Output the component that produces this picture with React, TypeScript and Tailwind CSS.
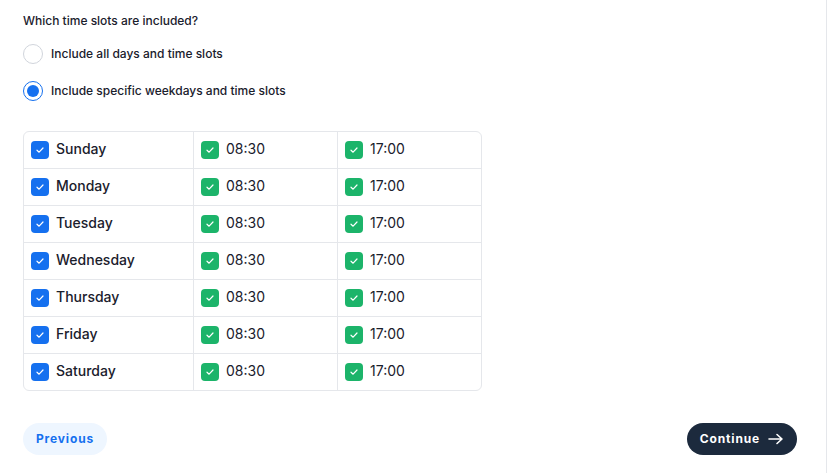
import React from "react";

const days = ["Sunday", "Monday", "Tuesday", "Wednesday", "Thursday", "Friday", "Saturday"];

function Check({ color }: { color: string }) {
  return (
    <span className={`flex h-[18px] w-[18px] shrink-0 items-center justify-center rounded-[4px] ${color}`}>
      <svg width="10" height="10" viewBox="0 0 10 10" fill="none">
        <path d="M2 5.2 L4.1 7.2 L8 3" stroke="white" strokeWidth="1.2" strokeLinecap="round" strokeLinejoin="round" />
      </svg>
    </span>
  );
}

export default function App() {
  return (
    <div className="flex h-[473px] w-[829px] bg-white" style={{ fontFamily: "Inter, 'Liberation Sans', sans-serif" }}>
      <div className="flex w-[827px] flex-col border-r border-gray-200 pl-[23px] pr-[29px] pt-[13px]">
        <div className="text-[12px] font-medium leading-[16px] text-[#1a202c]">Which time slots are included?</div>
        <div className="mt-[15px] flex items-center gap-[8px]">
          <span className="h-[20px] w-[20px] rounded-full border border-gray-300 bg-white" />
          <span className="text-[12px] font-medium text-[#1a202c]">Include all days and time slots</span>
        </div>
        <div className="mt-[17px] flex items-center gap-[8px]">
          <span className="flex h-[20px] w-[20px] items-center justify-center rounded-full border border-[#1570ef] bg-white">
            <span className="h-[12px] w-[12px] rounded-full bg-[#1570ef]" />
          </span>
          <span className="text-[12px] font-medium text-[#1a202c]">Include specific weekdays and time slots</span>
        </div>
        <div className="mt-[30px] w-[459px] overflow-hidden rounded-[6px] border border-gray-200">
          {days.map((d, i) => (
            <div key={d} className={`grid grid-cols-[170px_144px_1fr] ${i > 0 ? "h-[37px] border-t border-gray-200" : "h-[36px]"}`}>
              <div className="flex items-center gap-[7px] border-r border-gray-200 pl-[7px]">
                <Check color="bg-[#1570ef]" />
                <span className="mb-[3px] text-[14px] font-medium text-[#1a202c]">{d}</span>
              </div>
              <div className="flex items-center gap-[7px] border-r border-gray-200 pl-[7px]">
                <Check color="bg-[#1cb46a]" />
                <span className="mb-[3px] text-[14px] text-[#1a202c]">08:30</span>
              </div>
              <div className="flex items-center gap-[7px] pl-[7px]">
                <Check color="bg-[#1cb46a]" />
                <span className="mb-[3px] text-[14px] text-[#1a202c]">17:00</span>
              </div>
            </div>
          ))}
        </div>
        <div className="mt-[32px] flex items-center justify-between">
          <button className="h-[32px] rounded-full bg-[#eef6ff] px-[13px] text-[12px] font-bold tracking-[0.07em] text-[#1570ef]">
            Previous
          </button>
          <button className="flex h-[32px] items-center gap-[8px] rounded-full bg-[#1c2a3d] px-[13px] text-[12px] font-bold tracking-[0.07em] text-white">
            Continue
            <svg width="16" height="12" viewBox="0 0 16 12" fill="none">
              <path d="M1 6 H14 M9 1.5 L14 6 L9 10.5" stroke="white" strokeWidth="1.6" strokeLinecap="round" strokeLinejoin="round" />
            </svg>
          </button>
        </div>
      </div>
    </div>
  );
}
